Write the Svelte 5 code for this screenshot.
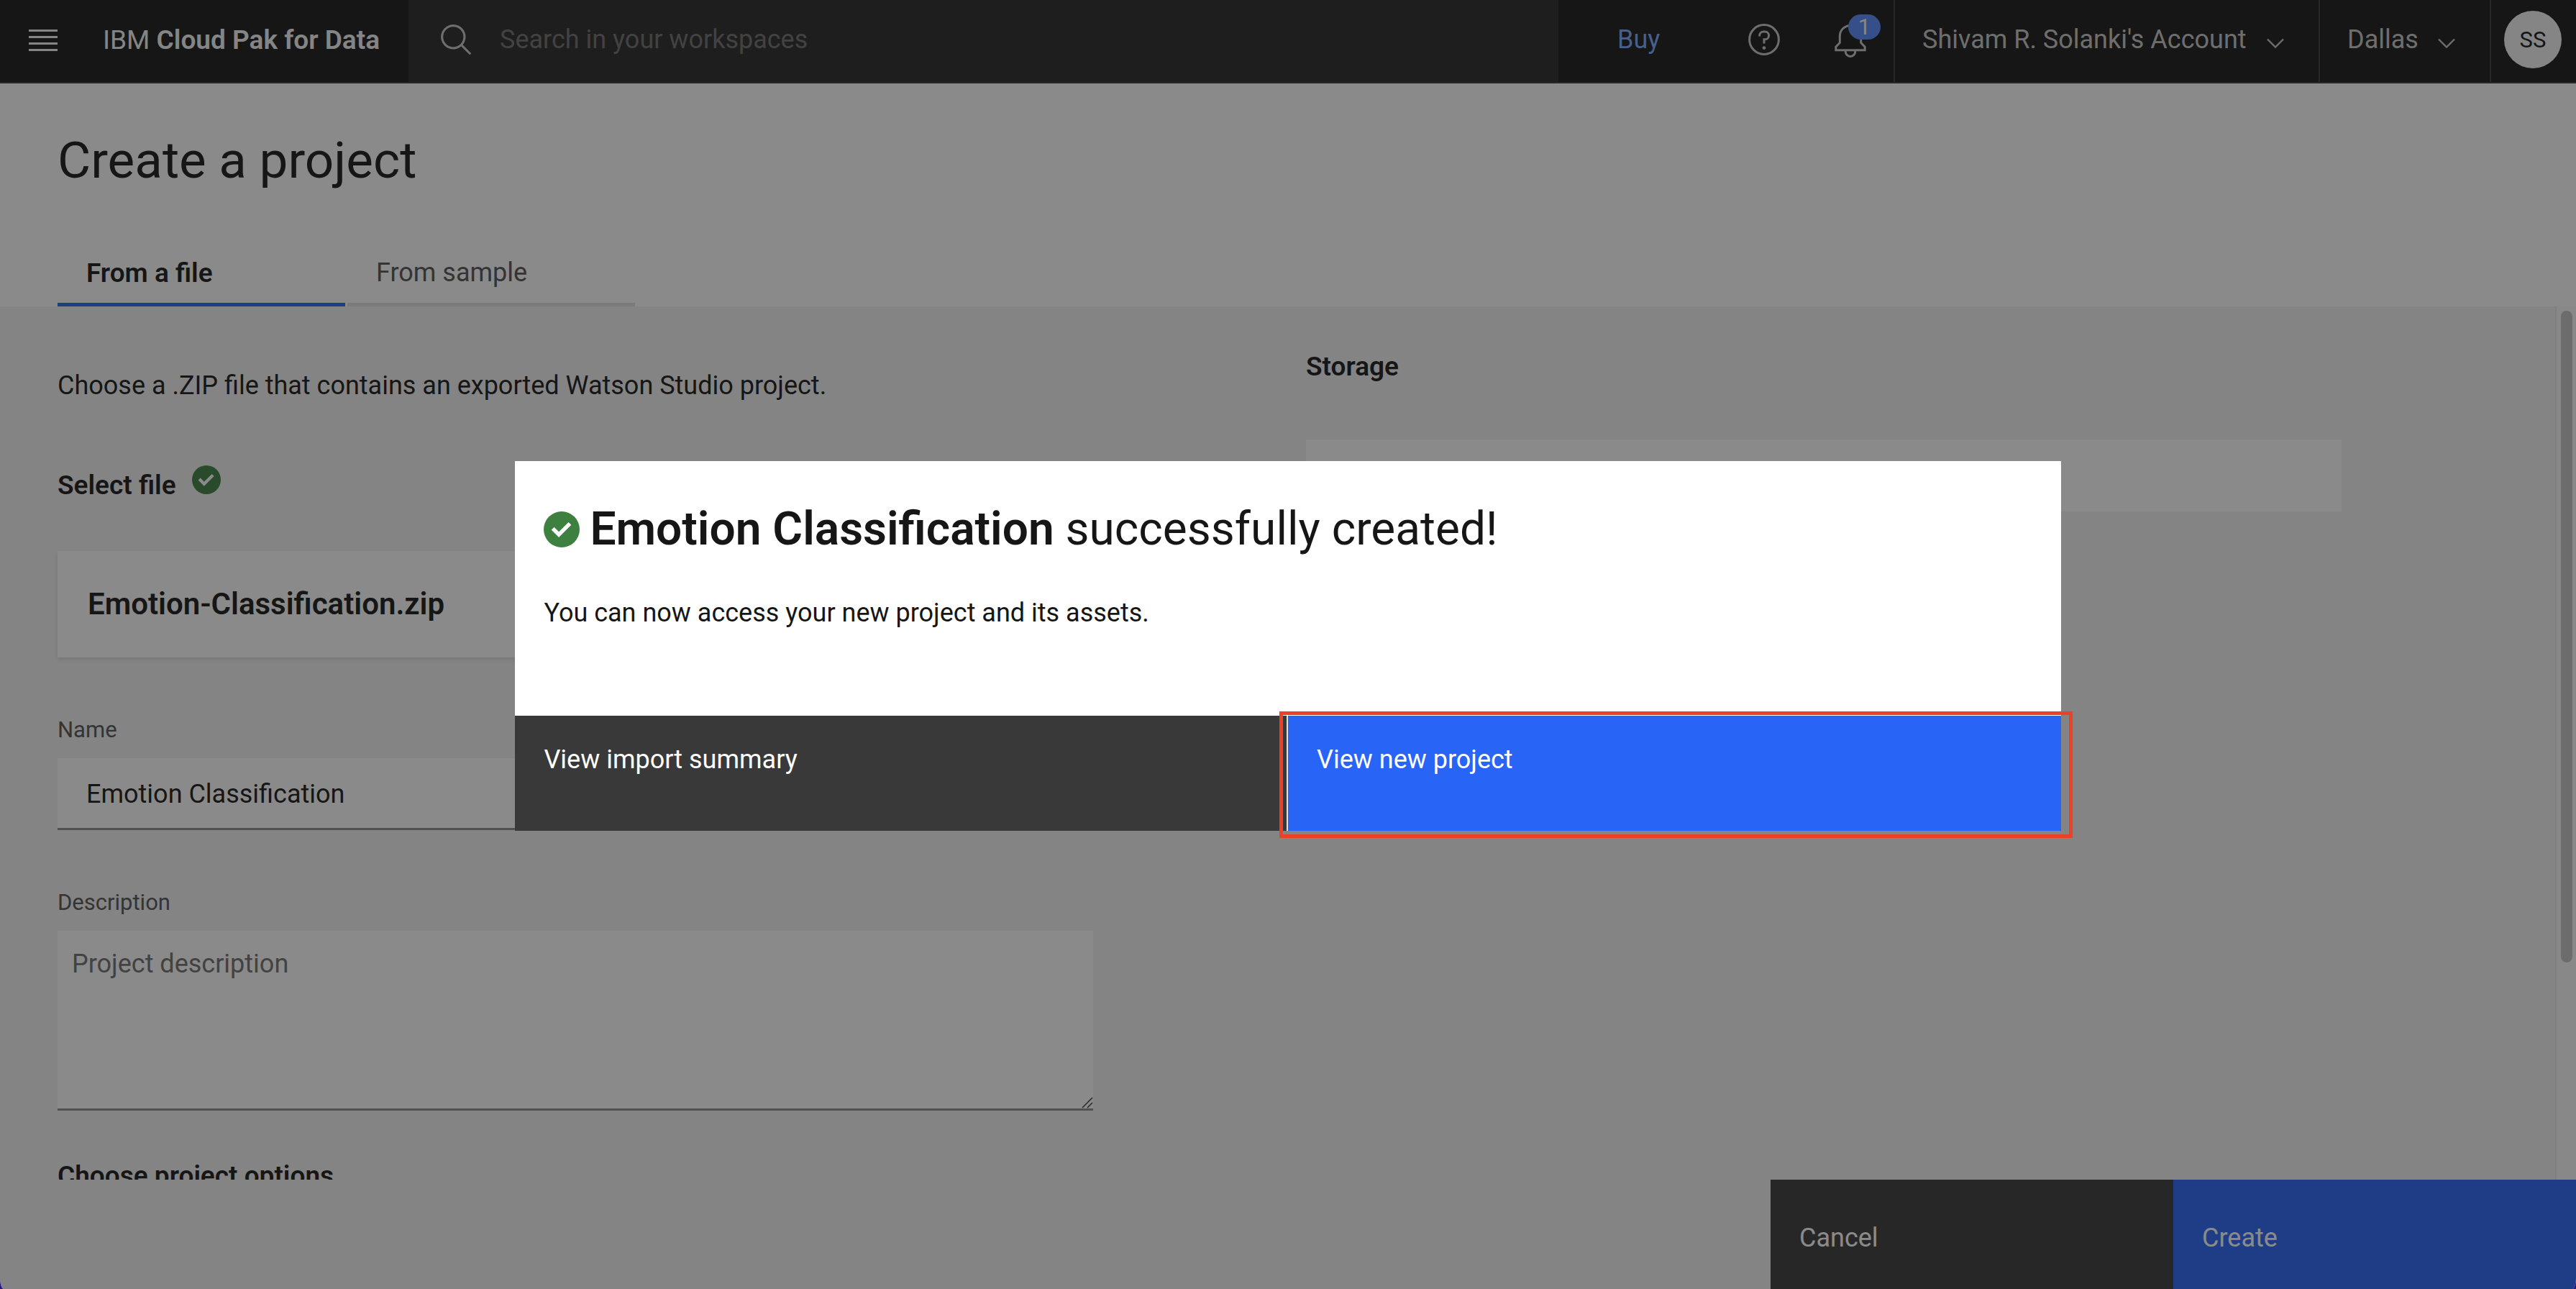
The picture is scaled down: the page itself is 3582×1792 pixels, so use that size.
<script>
  let query = $state('');
  let projectName = $state('Emotion Classification');
  let description = $state('');
</script>

{#snippet check()}
  <svg class="check" viewBox="0 0 28 28" aria-hidden="true">
    <circle cx="14" cy="14" r="14" fill="#3e8040" />
    <path d="M7.1 13.3l4.7 4.7 8.600-8.600" fill="none" stroke="#fff" stroke-width="3" />
  </svg>
{/snippet}

{#snippet chevron()}
  <svg class="chevron" viewBox="0 0 24 14" aria-hidden="true">
    <path d="M1 1.5l11 11 11-11" fill="none" stroke="currentColor" stroke-width="2.4" />
  </svg>
{/snippet}

<div class="app">
  <header class="topbar">
    <div class="brand">
      <button class="menu" aria-label="Open menu">
        <svg viewBox="0 0 40 30" width="40" height="30" aria-hidden="true">
          <path d="M0 1.5h40M0 10.5h40M0 19.5h40M0 28.5h40" stroke="currentColor" stroke-width="3" />
        </svg>
      </button>
      <a class="product" href="#home">IBM <b>Cloud Pak for Data</b></a>
    </div>
    <label class="search">
      <svg viewBox="0 0 32 32" width="50" height="50" aria-hidden="true">
        <path fill="currentColor" d="M29 27.6l-7.55-7.57a11 11 0 1 0-1.42 1.42L27.6 29ZM4 13a9 9 0 1 1 9 9 9 9 0 0 1-9-9Z" />
      </svg>
      <input type="search" aria-label="Search" placeholder="Search in your workspaces" bind:value={query} />
    </label>
    <nav class="tools" aria-label="Account">
      <a class="buy" href="#buy">Buy</a>
      <button class="tool help" aria-label="Help">
        <svg viewBox="0 0 50 50" width="50" height="50" fill="none" stroke="currentColor" stroke-width="3" aria-hidden="true">
          <circle cx="25" cy="25" r="20.4" />
          <path d="M18.7 20.5v-1a5.5 5.5 0 0 1 5.5-5.5h2a5.4 5.4 0 0 1 0 10.8h-1.2v5.7" />
          <circle cx="25" cy="36.6" r="2.4" fill="currentColor" stroke="none" />
        </svg>
      </button>
      <button class="tool bell" aria-label="Notifications">
        <svg viewBox="0 0 50 50" width="50" height="50" fill="none" stroke="currentColor" stroke-width="3" aria-hidden="true">
          <path d="M4.8 39.7v-4.6l5.5-5.6v-9.3a14.7 14.7 0 0 1 29.4 0v9.3l5.5 5.6v4.6z" />
          <path d="M18.2 40v1.6a6.8 6.8 0 0 0 13.6 0v-1.6" />
        </svg>
        <span class="badge">1</span>
      </button>
      <button class="picker account">Shivam R. Solanki's Account {@render chevron()}</button>
      <button class="picker region">Dallas {@render chevron()}</button>
      <div class="profile"><button class="avatar" aria-label="Profile">SS</button></div>
    </nav>
  </header>

  <section class="heading">
    <h1>Create a project</h1>
    <div class="tabs" role="tablist">
      <button role="tab" aria-selected="true" class="tab active">From a file</button>
      <button role="tab" aria-selected="false" class="tab">From sample</button>
    </div>
  </section>

  <div class="viewport">
    <main class="content">
      <div class="column main">
        <p>Choose a .ZIP file that contains an exported Watson Studio project.</p>
        <div class="select-file">
          <h2>Select file</h2>
          {@render check()}
        </div>
        <div class="file">Emotion-Classification.zip</div>
        <label class="caption" for="name">Name</label>
        <input id="name" type="text" bind:value={projectName} />
        <label class="caption" for="description">Description</label>
        <div class="area">
          <textarea id="description" placeholder="Project description" bind:value={description}></textarea>
          <svg class="grip" viewBox="0 0 16 16" aria-hidden="true">
            <path d="M1 15L15 1M8 15l7-7" stroke="#3a3a3a" stroke-width="1.5" />
          </svg>
        </div>
        <h2 class="options">Choose project options</h2>
      </div>
      <div class="column storage">
        <h2>Storage</h2>
        <div class="storage-box"></div>
      </div>
    </main>
    <div class="track" aria-hidden="true"><div class="thumb"></div></div>
  </div>

  <footer class="actions">
    <button class="secondary">Cancel</button>
    <button class="primary">Create</button>
  </footer>

  <div class="overlay">
    <div class="modal" role="dialog" aria-modal="true" aria-labelledby="modal-title">
      <div class="modal-body">
        <h2 id="modal-title">{@render check()}<span><b>Emotion Classification</b> successfully created!</span></h2>
        <p>You can now access your new project and its assets.</p>
      </div>
      <div class="modal-actions">
        <button class="secondary">View import summary</button>
        <div class="highlight">
          <button class="primary">View new project</button>
        </div>
      </div>
    </div>
  </div>
</div>

<style>
  :global(body) {
    margin: 0;
    background: #2b1680;
  }
  .app {
    position: relative;
    display: flex;
    flex-direction: column;
    height: 100vh;
    overflow: hidden;
    border-radius: 0 0 5px 5px / 0 0 16px 16px;
    background: #f3f3f3;
    color: #161616;
    font: 400 36px/45px Roboto, "Liberation Sans", sans-serif;
  }
  .app *,
  .app *::before,
  .app *::after {
    box-sizing: border-box;
  }
  button,
  input,
  textarea {
    margin: 0;
    padding: 0;
    border: 0;
    border-radius: 0;
    outline: 0;
    background: none;
    color: inherit;
    font: inherit;
    text-align: left;
  }
  a {
    color: inherit;
    text-decoration: none;
  }
  h1,
  h2,
  p {
    margin: 0;
    font-size: inherit;
    font-weight: 400;
  }
  b {
    font-weight: 600;
  }
  svg {
    display: block;
    flex: none;
  }

  .topbar {
    display: flex;
    flex: none;
    height: 116px;
    border-bottom: 2px solid #393939;
    background: #161616;
    color: #c6c6c6;
  }
  .brand {
    display: flex;
    align-items: center;
    gap: 63px;
    width: 568px;
    padding: 0 0 3px 40px;
    color: #f4f4f4;
    white-space: nowrap;
  }
  .product {
    font-size: 37px;
  }
  .search {
    display: flex;
    flex: 1;
    align-items: center;
    gap: 35px;
    padding: 0 0 3px 42px;
    background: #262626;
  }
  .search input {
    flex: 1;
    min-width: 0;
  }
  .search input::placeholder,
  textarea::placeholder {
    color: #6f6f6f;
    opacity: 1;
  }
  .tools {
    display: flex;
    align-items: stretch;
    white-space: nowrap;
  }
  .buy {
    display: flex;
    align-items: center;
    width: 261px;
    padding: 0 0 3px 82px;
    color: #78a9ff;
  }
  .tool {
    position: relative;
    display: flex;
    align-items: center;
    padding-bottom: 4px;
  }
  .help {
    width: 120px;
  }
  .bell {
    width: 85px;
  }
  .badge {
    position: absolute;
    top: 20px;
    left: 22px;
    width: 45px;
    border-radius: 18px;
    background: #5688fa;
    color: #f4f4f4;
    font-size: 31px;
    line-height: 35px;
    text-align: center;
  }
  .picker {
    display: flex;
    align-items: center;
    justify-content: space-between;
    padding: 0 48px 3px 38px;
    border-left: 2px solid #393939;
  }
  .account {
    width: 591px;
  }
  .region {
    width: 238px;
  }
  .chevron {
    width: 24px;
    margin-top: 8px;
  }
  .profile {
    display: flex;
    align-items: center;
    padding: 0 20px 4px 18px;
    border-left: 2px solid #393939;
  }
  .avatar {
    width: 80px;
    height: 80px;
    border-radius: 50%;
    background: #f4f4f4;
    color: #161616;
    font-size: 31px;
    text-align: center;
  }

  .heading {
    flex: none;
    padding: 62px 80px 0;
    background: #fff;
  }
  h1 {
    font-size: 71px;
    line-height: 90px;
  }
  .tabs {
    display: flex;
    gap: 3px;
    margin-top: 58px;
  }
  .tab {
    width: 400px;
    height: 100px;
    padding: 12px 40px 0;
    border-bottom: 5px solid #e0e0e0;
    color: #525252;
  }
  .tab.active {
    border-color: #2864f6;
    color: #161616;
    font-size: 37px;
    font-weight: 600;
  }

  .viewport {
    display: flex;
    flex: 1;
    min-height: 0;
    overflow: hidden;
  }
  .content {
    display: grid;
    flex: 1;
    grid-template-columns: minmax(0, 1440px) minmax(0, 1440px);
    gap: 296px;
    padding-left: 80px;
  }
  .column {
    display: flex;
    flex-direction: column;
  }
  .column h2 {
    font-size: 37px;
    font-weight: 600;
  }
  .main {
    padding-top: 88px;
  }
  .storage {
    gap: 79px;
    padding-top: 61px;
  }
  .select-file {
    display: flex;
    align-items: flex-end;
    gap: 22px;
    height: 50px;
    margin-top: 88px;
  }
  .select-file :global(.check) {
    align-self: flex-start;
    width: 40px;
  }
  .file {
    margin-top: 69px;
    padding: 49px 42px;
    background: #fff;
    box-shadow: 0 3px 6px #d8d8d8;
    font-size: 42px;
    font-weight: 600;
    line-height: 50px;
  }
  .caption {
    margin: 81px 0 19px;
    color: #525252;
    font-size: 31px;
    line-height: 40px;
  }
  #name {
    height: 100px;
    padding: 3px 40px 0;
    border-bottom: 3px solid #8d8d8d;
    background: #fff;
  }
  .area {
    position: relative;
  }
  textarea {
    display: block;
    width: 100%;
    height: 250px;
    padding: 24px 20px;
    border-bottom: 3px solid #8d8d8d;
    background: #fff;
    resize: none;
  }
  .grip {
    position: absolute;
    right: 0;
    bottom: 3px;
    width: 16px;
  }
  .options {
    margin-top: 68px;
  }
  .storage-box {
    height: 100px;
    background: #fff;
  }
  .track {
    width: 29px;
    padding: 6px 6px 0;
    border-left: 2px solid #e8e8e8;
    background: #fafafa;
  }
  .thumb {
    width: 16px;
    height: 75%;
    border-radius: 8px;
    background: #c2c2c2;
  }

  .actions {
    display: flex;
    flex: none;
    justify-content: flex-end;
    height: 152px;
  }
  .actions button {
    width: 560px;
    padding: 10px 40px 0;
  }
  .secondary {
    background: #393939;
    color: #fff;
  }
  .primary {
    background: #2864f6;
    color: #fff;
  }

  .overlay {
    position: absolute;
    inset: 0;
    display: flex;
    align-items: center;
    justify-content: center;
    padding-top: 4px;
    background: rgba(22, 22, 22, 0.5);
  }
  .modal {
    width: 60%;
    background: #fff;
  }
  .modal-body {
    padding: 55px 40px 120px;
  }
  .modal-body h2 {
    display: flex;
    align-items: center;
    gap: 14px;
    font-size: 64px;
    line-height: 80px;
  }
  .modal-body h2 :global(.check) {
    width: 50px;
  }
  .modal-body p {
    margin-top: 54px;
  }
  .modal-actions {
    display: grid;
    grid-template-columns: 1fr 1fr;
    height: 160px;
  }
  .modal-actions button {
    width: 100%;
    height: 100%;
    padding: 0 40px 38px;
  }
  .highlight {
    position: relative;
    box-shadow: -2px 0 #e0e0e0;
  }
  .highlight::after {
    content: "";
    position: absolute;
    inset: -6px -16px -10px -12px;
    border: 5px solid #ee4024;
    pointer-events: none;
  }
</style>
